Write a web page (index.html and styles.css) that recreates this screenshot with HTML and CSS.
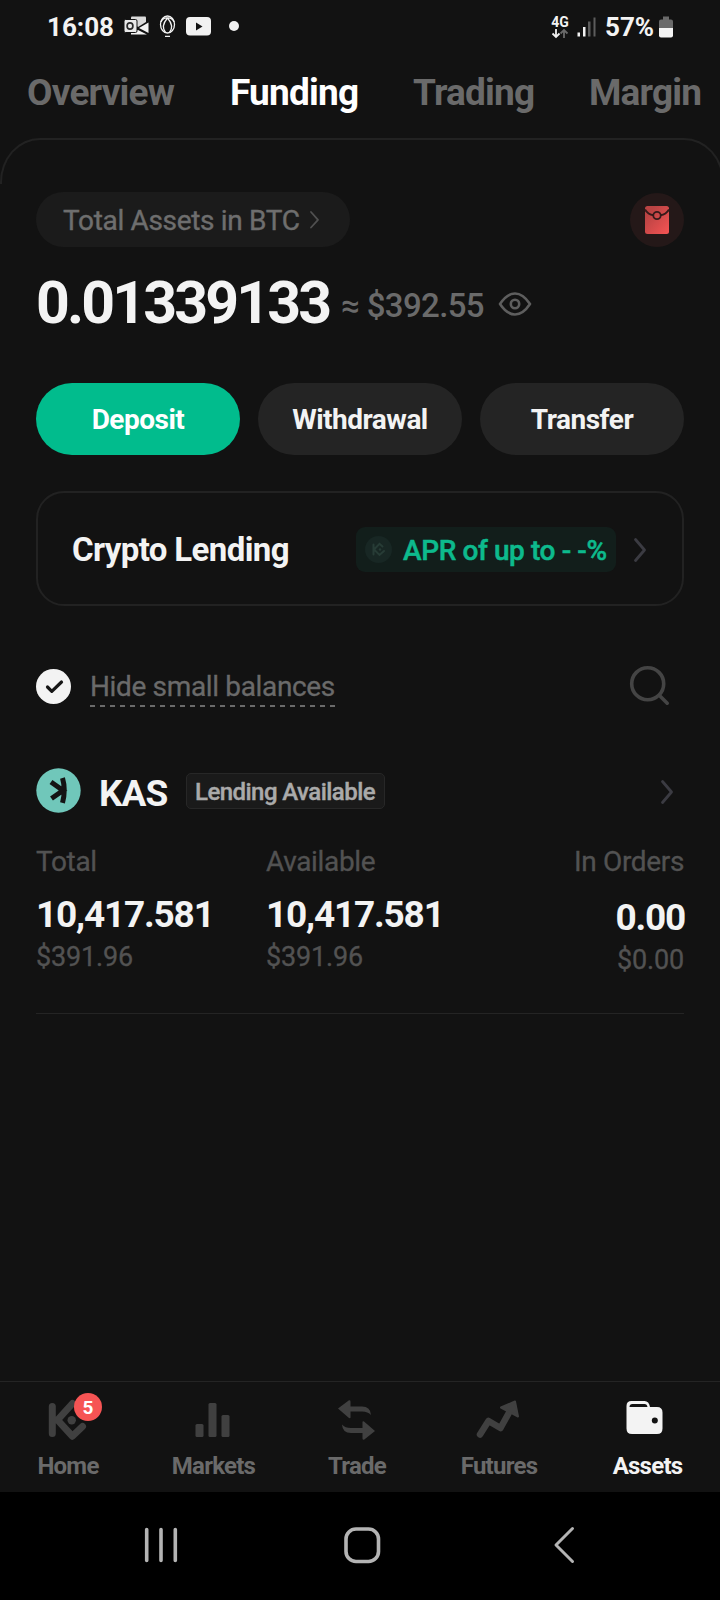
FILE: index.html
```html
<!DOCTYPE html>
<html lang="en">
<head>
<meta charset="utf-8">
<title>Funding</title>
<link rel="stylesheet" href="styles.css">
</head>
<body>
<div class="app">
  <header class="status">
    <span class="clock">16:08</span>
    <svg class="status-left" viewBox="122 12 120 30" width="120" height="30">
      <path d="M131 17.500Q131 16.500 132 16.500H145Q146 16.500 146 17.500V22L138 27L131 22Z" fill="#d9d9d9"/>
      <path d="M148.500 22.500V33L139 28Z M131 34.500V30H138L147 34.500Z" fill="#f2f2f2"/>
      <rect x="124" y="19.500" width="13" height="13" rx="1.500" fill="#e9e9e9" stroke="#121212" stroke-width="1"/>
      <ellipse cx="130" cy="26" rx="2.900" ry="3.200" fill="none" stroke="#2a2a2a" stroke-width="1.700"/>
      <g fill="none" stroke="#f2f2f2" stroke-width="1.300"><ellipse cx="167.500" cy="24.500" rx="7" ry="8.500"/><path d="M167.500 18Q160.500 26 165.500 32.500M167.500 18Q174.500 26 169.500 32.500M161 22Q163 17.500 167.500 18Q172 17.500 174 22M165 36.300H170"/></g>
      <rect x="186" y="17" width="25" height="18.500" rx="4" fill="#f2f2f2"/><path d="M196 22.500V30.500L202.500 26.500Z" fill="#121212"/>
      <circle cx="234" cy="26" r="5" fill="#f2f2f2"/>
    </svg>
    <span class="network"><b>4G</b>
      <svg viewBox="551 27 18 11" width="18" height="11" fill="none" stroke-width="1.800"><path d="M556 28V36M552.500 32.500L556 36L559.500 32.500" stroke="#f2f2f2"/><path d="M564 37V29M560.500 32.500L564 29L567.500 32.500" stroke="#6a6a6a"/></svg>
    </span>
    <svg class="signal" viewBox="577 15 20 22" width="20" height="22"><path d="M577.500 31.500h2.500v4h-2.500zM583 26h2.500v9.500h-2.500z" fill="#f2f2f2"/><path d="M588 20.500h2.500v15h-2.500zM593.500 16.500h2v19h-2z" fill="#5c5c5c"/></svg>
    <span class="percent">57%</span>
    <svg class="battery" viewBox="658 15 16 22" width="16" height="22"><path d="M663 15.500h6v3h2q2 0 2 2v7h-14v-7q0-2 2-2h2z" fill="#6a6a6a"/><path d="M659 27h14v7.500q0 2-2 2h-10q-2 0-2-2z" fill="#f4f4f4"/></svg>
  </header>

  <nav class="tabs">
    <span class="tab t-overview">Overview</span>
    <span class="tab t-funding active">Funding</span>
    <span class="tab t-trading">Trading</span>
    <span class="tab t-margin">Margin</span>
  </nav>

  <main class="panel">
    <div class="row-top">
      <div class="pill"><span>Total Assets in BTC</span>
        <svg viewBox="308 209 14 22" width="14" height="22"><path d="M311 212L318 219.800L311 227.500" fill="none" stroke="#505050" stroke-width="1.800" stroke-linecap="round" stroke-linejoin="round"/></svg>
      </div>
      <svg class="gift" viewBox="630 193 54 54" width="54" height="54">
        <defs><linearGradient id="red" x1="0" y1="0" x2="1" y2="1"><stop offset="0.200" stop-color="#b94343"/><stop offset="1" stop-color="#f65454"/></linearGradient></defs>
        <circle cx="657" cy="220" r="27" fill="#241818"/>
        <rect x="645" y="206" width="24" height="28" rx="2.500" fill="url(#red)"/>
        <path d="M645 209.500Q648 214.500 653.500 215.300M669 209.500Q666 214.500 660.500 215.300" fill="none" stroke="#351a1a" stroke-width="2"/>
        <circle cx="657" cy="215.500" r="3.700" fill="none" stroke="#351a1a" stroke-width="1.800"/>
      </svg>
    </div>

    <div class="balance">
      <span class="amount">0.01339133</span>
      <span class="approx">≈ $392.55</span>
      <svg viewBox="497 289 36 30" width="36" height="30" fill="none" stroke="#5e5e5e" stroke-width="2.600"><path d="M500 304Q507 293.500 515 293.500T530 304Q523 314.500 515 314.500T500 304Z" stroke-linejoin="round"/><circle cx="515" cy="304" r="4.200"/></svg>
    </div>

    <div class="actions">
      <span class="btn primary">Deposit</span>
      <span class="btn">Withdrawal</span>
      <span class="btn">Transfer</span>
    </div>

    <section class="lending">
      <span class="lending-title">Crypto Lending</span>
      <span class="apr">
        <svg viewBox="365 536 27 27" width="27" height="27"><circle cx="378.500" cy="549.500" r="13.500" fill="#182724"/><path d="M373.500 544.500V554.500M382.500 546.500L379.500 543.800L374 549.500L379.500 555L384 551" fill="none" stroke="#273c36" stroke-width="2" stroke-linecap="round"/><circle cx="380" cy="549.500" r="1.200" fill="#273c36"/></svg>
        <span>APR of up to - -%</span>
      </span>
      <svg class="chev" viewBox="632 536 16 28" width="16" height="28"><path d="M635.500 539.500L644.500 550L635.500 560.500" /></svg>
    </section>

    <div class="filter">
      <svg viewBox="36 669 35 35" width="35" height="35"><circle cx="53.500" cy="686.500" r="17.500" fill="#f3f3f3"/><path d="M47.500 687L51.800 691.300L61.500 682" fill="none" stroke="#161616" stroke-width="3.200" stroke-linecap="round" stroke-linejoin="round"/></svg>
      <span class="hide">Hide small balances</span>
      <svg class="search" viewBox="628 664 42 42" width="42" height="42" fill="none" stroke="#444" stroke-width="3.600" stroke-linecap="round"><circle cx="647.700" cy="683.700" r="16"/><path d="M659.500 695.500L667.200 703.200"/></svg>
    </div>

    <div class="coin">
      <svg viewBox="36 768 45 45" width="45" height="45"><circle cx="58.500" cy="790.500" r="22.200" fill="#70c7ba"/><path d="M62.500 778Q66 790 62.500 802.800M51 782L63 790.500L51.500 798.500" fill="none" stroke="#141414" stroke-width="5"/></svg>
      <span class="symbol">KAS</span>
      <span class="tag">Lending Available</span>
      <svg class="chev" viewBox="659 778 16 28" width="16" height="28"><path d="M662.500 781.500L671.500 792L662.500 802.500"/></svg>
    </div>

    <div class="figures">
      <div><p class="label">Total</p><p class="value">10,417.581</p><p class="fiat">$391.96</p></div>
      <div><p class="label">Available</p><p class="value">10,417.581</p><p class="fiat">$391.96</p></div>
      <div class="right"><p class="label">In Orders</p><p class="value">0.00</p><p class="fiat">$0.00</p></div>
    </div>
  </main>

  <nav class="bottom">
    <div class="item"><span class="icon-wrap">
      <svg viewBox="44 1394 48 50" width="48" height="50" fill="none" stroke="#404040" stroke-width="7" stroke-linecap="round" stroke-linejoin="round"><path d="M52.300 1406.500V1433.500M72.500 1403.500L57.500 1420L72.300 1436.200L82.500 1426.500"/><circle cx="71.700" cy="1420.300" r="4.200" fill="#404040" stroke="none"/></svg>
      <span class="badge">5</span></span><span>Home</span></div>
    <div class="item"><svg viewBox="189.500 1394 48 50" width="48" height="50" fill="#404040"><rect x="195" y="1424" width="8" height="13" rx="1.500"/><rect x="208" y="1403" width="8" height="34" rx="1.500"/><rect x="221" y="1415" width="8" height="22" rx="1.500"/></svg><span>Markets</span></div>
    <div class="item"><svg viewBox="333 1394 48 50" width="48" height="50" fill="#404040"><path d="M338 1408.500L349 1400.200Q350.500 1400 350.500 1401.500V1406.500H362Q370.500 1406.500 371 1415Q368 1411.500 362 1411.500H350.500V1417.500Q350.500 1418.500 349 1418Z"/><path d="M375 1431L364 1439.800Q362.500 1440 362.500 1438.500V1433H351Q342.500 1433 342 1424.500Q345 1428 351 1428H362.500V1422Q362.500 1421 364 1421.500Z"/></svg><span>Trade</span></div>
    <div class="item"><svg viewBox="475 1394 48 50" width="48" height="50"><path d="M480 1434.500L488.500 1421L500.500 1428L511 1409" fill="none" stroke="#404040" stroke-width="6.500" stroke-linecap="round" stroke-linejoin="round"/><path d="M501 1407.500L515 1401.500L518 1416.500Z" fill="#404040" stroke="#404040" stroke-width="2" stroke-linejoin="round"/></svg><span>Futures</span></div>
    <div class="item current"><svg viewBox="623.500 1394 48 50" width="48" height="50"><path d="M626 1411V1406Q626 1401 631 1401H644Q648.500 1401 649.500 1407H656.500Q662 1407 662 1412.500V1428.500Q662 1434 656.500 1434H631.500Q626 1434 626 1428.500Z" fill="#f3f3f3"/><path d="M629 1407Q629 1404 632 1404H644Q646.500 1404 647 1407Z" fill="#121212"/><circle cx="654.300" cy="1420.500" r="3" fill="#121212"/></svg><span>Assets</span></div>
  </nav>

  <footer class="system">
    <svg viewBox="140 1522 440 46" width="440" height="46" fill="none" stroke="#b4b4b4" stroke-width="3.600" stroke-linecap="round" stroke-linejoin="round"><path d="M146.700 1529.500V1560.500M161 1529.500V1560.500M175.300 1529.500V1560.500"/><rect x="346" y="1529" width="32.500" height="32.500" rx="10"/><path d="M572.500 1528.500L556 1545L572.500 1561.500" stroke-width="3"/></svg>
  </footer>
</div>
</body>
</html>
```
FILE: styles.css
```css
* { box-sizing: border-box; }
body { margin: 0; background: #121212; color: #f3f3f3; font-family: Roboto, "Liberation Sans", sans-serif; }
svg { display: block; flex: none; }
p { margin: 0; }
.app { width: 720px; height: 1600px; display: flex; flex-direction: column; overflow: hidden; white-space: nowrap; }

.status { height: 54px; padding-left: 47px; display: flex; align-items: center; font-size: 26px; font-weight: 700; }
.clock { width: 75px; }
.network { display: flex; flex-direction: column; align-items: center; margin-left: 309px; width: 18px; font-size: 14px; line-height: 12px; }
.network b { font-weight: 700; }
.signal { margin-left: 8px; }
.percent { margin-left: 8px; width: 53px; }

.tabs { height: 76px; margin-bottom: 8px; display: flex; align-items: center; font-size: 37px; font-weight: 700; color: #6a6a6a; padding-left: 27px; }
.tab { flex: none; letter-spacing: -0.8px; }
.t-overview { width: 203px; }
.t-funding { width: 183px; }
.t-trading { width: 176px; }
.active { color: #fff; }

.panel { position: relative; flex: 1; padding: 54px 36px 0; }
.panel::before { content: ""; position: absolute; left: 0; top: 0; width: 720px; height: 44px; border: 2px solid #222; border-bottom: 0; border-radius: 40px 40px 0 0 / 44px 44px 0 0; }

.row-top { display: flex; justify-content: space-between; align-items: center; height: 55px; }
.pill { width: 314px; height: 55px; border-radius: 28px; background: #1b1b1b; color: #6e6e6e; font-size: 28px; display: flex; align-items: center; padding-left: 27px; }
.pill span { width: 245px; letter-spacing: -0.33px; padding-top: 1px; -webkit-text-stroke: 0.4px; }
.gift { margin-top: 1px; }

.balance { display: flex; align-items: center; height: 74px; margin-top: 18px; }
.balance svg { margin-top: 4px; }
.amount { font-size: 59px; font-weight: 700; width: 305px; letter-spacing: -2.85px; }
.approx { font-size: 33px; font-weight: 500; color: #6a6a6a; width: 156px; padding-top: 6px; letter-spacing: -0.65px; }

.actions { display: grid; grid-template-columns: repeat(3, 1fr); gap: 18px; margin-top: 44px; }
.btn { height: 72px; border-radius: 36px; background: #242424; display: flex; align-items: center; justify-content: center; font-size: 28px; font-weight: 700; letter-spacing: -0.5px; }
.primary { background: #01bc8d; color: #fff; }

.lending { height: 115px; margin-top: 36px; border: 2px solid #222; border-radius: 28px; display: flex; align-items: center; padding: 2px 34px 0; }
.lending-title { font-size: 33px; font-weight: 700; width: 284px; letter-spacing: -0.62px; }
.apr { width: 260px; height: 45px; border-radius: 9px; background: #121e1b; color: #0dba8d; font-size: 28px; font-weight: 500; display: flex; align-items: center; gap: 11px; padding-left: 9px; letter-spacing: -0.4px; -webkit-text-stroke: 0.5px; }
.apr span { padding-top: 1px; }
.chev { margin-left: auto; fill: none; stroke: #3b3b42; stroke-width: 2.8; stroke-linecap: round; stroke-linejoin: round; }
.lending .chev { margin-left: 16px; }

.filter { display: flex; align-items: center; height: 60px; margin-top: 50px; }
.hide { margin-left: 19px; width: 245px; font-size: 28px; line-height: 36px; letter-spacing: -0.35px; color: #6a6a6a; -webkit-text-stroke: 0.3px; background: repeating-linear-gradient(90deg, #6a6a6a 0 5px, transparent 5px 10px) 0 100% / 100% 2px no-repeat; padding: 4px 0 2px; }
.search { margin: -2px 14px 0 auto; }

.coin { display: flex; align-items: center; height: 45px; margin-top: 52px; }
.symbol { font-size: 37px; font-weight: 700; margin-left: 18px; width: 87px; padding-top: 6px; letter-spacing: -1px; }
.tag { width: 199px; height: 36px; border: 1px solid #272727; border-radius: 5px; background: #1a1a1a; color: #aaa; font-size: 24px; font-weight: 500; line-height: 36px; padding-left: 8px; letter-spacing: -0.55px; -webkit-text-stroke: 0.4px; }
.coin .chev { margin-right: 9px; margin-top: 3px; }

.figures { display: grid; grid-template-columns: 230px 230px 1fr; margin-top: 29px; height: 172px; border-bottom: 1px solid #242424; }
.label { font-size: 28px; line-height: 40px; color: #525252; letter-spacing: -0.35px; -webkit-text-stroke: 0.3px; }
.value { font-size: 37px; line-height: 44px; font-weight: 700; margin-top: 11px; letter-spacing: -1.2px; }
.fiat { font-size: 27px; line-height: 40px; color: #525252; letter-spacing: -0.15px; -webkit-text-stroke: 0.3px; }
.right { text-align: right; }
.right .value { margin-top: 14px; margin-right: -1px; }

.bottom { height: 111px; border-top: 1px solid #242424; display: grid; grid-template-columns: 136px 155px 132px 152px 145px; padding-top: 12px; font-size: 24px; font-weight: 700; color: #6a6a6a; letter-spacing: -0.75px; }
.item { display: flex; flex-direction: column; align-items: center; }
.item > span:last-child { line-height: 44px; }
.icon-wrap { position: relative; display: block; }
.badge { position: absolute; left: 30px; top: -1px; width: 28px; height: 28px; border-radius: 50%; background: #f65454; color: #fff; font-size: 19px; line-height: 29px; text-align: center; letter-spacing: 0; }
.current { color: #f3f3f3; }

.system { height: 108px; background: #000; padding: 30px 0 0 140px; }
```
